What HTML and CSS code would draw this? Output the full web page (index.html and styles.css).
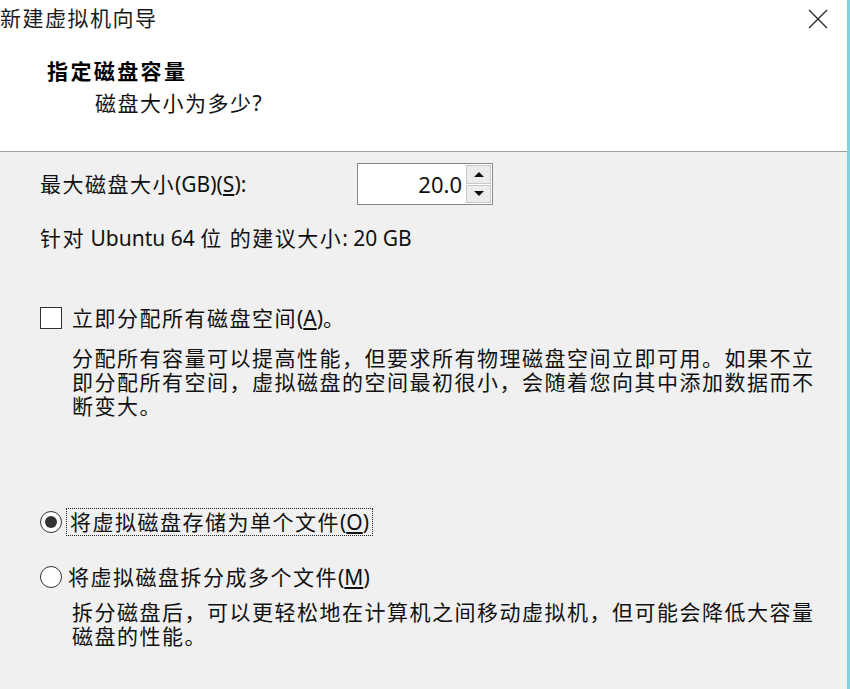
FILE: index.html
```html
<!DOCTYPE html>
<html lang="zh-CN">
<head>
<meta charset="utf-8">
<title>新建虚拟机向导</title>
<link rel="stylesheet" href="styles.css">
</head>
<body>
<div class="window">
  <div class="titlebar">
    <span class="title">新建虚拟机向导</span>
    <svg class="close" width="20" height="20" viewBox="0 0 20 20" aria-hidden="true">
      <path d="M1 1 L19 19 M19 1 L1 19" stroke="#2b2b2b" stroke-width="1.4" fill="none"/>
    </svg>
  </div>
  <div class="header">
    <div class="heading">指定磁盘容量</div>
    <div class="subheading">磁盘大小为多少<span class="lat">?</span></div>
  </div>
  <div class="content">
    <div class="size-row">
      <label class="size-label">最大磁盘大小<span class="lat">(GB)(<u>S</u>):</span></label>
      <div class="spinbox">
        <span class="spin-value lat">20.0</span>
        <div class="spin-buttons">
          <div class="spin-btn"><span class="arrow-up"></span></div>
          <div class="spin-btn"><span class="arrow-down"></span></div>
        </div>
      </div>
    </div>
    <div class="recommend">针对<span class="lat"> Ubuntu 64 </span>位 的建议大小<span class="lat">: 20 GB</span></div>
    <div class="check-row">
      <span class="checkbox"></span>
      <span>立即分配所有磁盘空间<span class="lat">(<u>A</u>)</span>。</span>
    </div>
    <p class="desc desc-alloc">分配所有容量可以提高性能，但要求所有物理磁盘空间立即可用。如果不立即分配所有空间，虚拟磁盘的空间最初很小，会随着您向其中添加数据而不断变大。</p>
    <div class="radio-row radio-first">
      <span class="radio checked"><span class="dot"></span></span>
      <span class="focus">将虚拟磁盘存储为单个文件<span class="lat">(<u>O</u>)</span></span>
    </div>
    <div class="radio-row radio-second">
      <span class="radio"></span>
      <span>将虚拟磁盘拆分成多个文件<span class="lat">(<u>M</u>)</span></span>
    </div>
    <p class="desc desc-split">拆分磁盘后，可以更轻松地在计算机之间移动虚拟机，但可能会降低大容量磁盘的性能。</p>
  </div>
</div>
</body>
</html>
```

FILE: styles.css
```css
* { box-sizing: border-box; }
html, body {
  margin: 0;
  padding: 0;
  width: 850px;
  height: 689px;
  overflow: hidden;
}
body {
  font-family: "Noto Sans", "Noto Sans CJK SC", sans-serif;
  font-size: 21px;
  letter-spacing: 1.5px;
  line-height: 24px;
  color: #111;
  background: #f0f0f0;
}
.lat { letter-spacing: 0; }
.window {
  height: 689px;
  border-right: 3px solid #7fd3e1;
  background: #f0f0f0;
  display: flex;
  flex-direction: column;
}
.titlebar {
  height: 36px;
  background: #fff;
  display: flex;
  align-items: center;
  justify-content: space-between;
  padding: 0 19px 0 0;
}
.title {
  color: #1a1a1a;
}
.close { display: block; margin-top: 1px; }
.header {
  height: 116px;
  background: #fff;
  border-bottom: 1px solid #a0a0a0;
  padding: 23px 0 0 47px;
}
.heading {
  font-weight: bold;
  letter-spacing: 2.4px;
  color: #000;
}
.subheading {
  margin-top: 8px;
  padding-left: 48px;
  color: #111;
}
.content {
  flex: 1;
  padding: 0 0 0 40px;
}
.size-row {
  margin-top: 11px;
  display: flex;
  align-items: center;
}
.size-label { width: 317px; }
.spinbox {
  width: 136px;
  height: 42px;
  background: #fff;
  border: 1px solid #8a8a8a;
  display: flex;
  align-items: center;
  justify-content: flex-end;
  padding: 1px 1px 1px 0;
}
.spin-value {
  font-size: 22px;
  margin-right: 4px;
}
.spin-buttons {
  width: 25px;
  height: 38px;
  display: flex;
  flex-direction: column;
  gap: 1px;
}
.spin-btn {
  flex: 1;
  background: #ececec;
  border: 1px solid #c8c8c8;
  display: flex;
  align-items: center;
  justify-content: center;
}
.arrow-up, .arrow-down {
  width: 0;
  height: 0;
  border-left: 5px solid transparent;
  border-right: 5px solid transparent;
}
.arrow-up { border-bottom: 5px solid #111; }
.arrow-down { border-top: 5px solid #111; }
.recommend { margin-top: 21px; }
.check-row {
  margin-top: 56px;
  display: flex;
  align-items: center;
  gap: 10px;
}
.checkbox {
  width: 22px;
  height: 22px;
  border: 1px solid #333;
  background: #fff;
  flex: none;
}
.desc {
  margin: 0;
  padding-left: 32px;
  width: 782px;
}
.desc-alloc { margin-top: 16px; }
.radio-row {
  display: flex;
  align-items: center;
  gap: 6px;
}
.radio-first { margin-top: 92px; }
.radio-second { margin-top: 31px; }
.radio {
  width: 22px;
  height: 22px;
  border: 1px solid #333;
  border-radius: 50%;
  background: #fff;
  display: flex;
  align-items: center;
  justify-content: center;
  flex: none;
}
.dot {
  width: 12px;
  height: 12px;
  border-radius: 50%;
  background: #333;
}
.focus {
  outline: 1px dotted #222;
  outline-offset: 1px;
  padding: 0 2px 0 2px;
}
.desc-split { margin-top: 11px; }
u { text-underline-offset: 2px; }
```
